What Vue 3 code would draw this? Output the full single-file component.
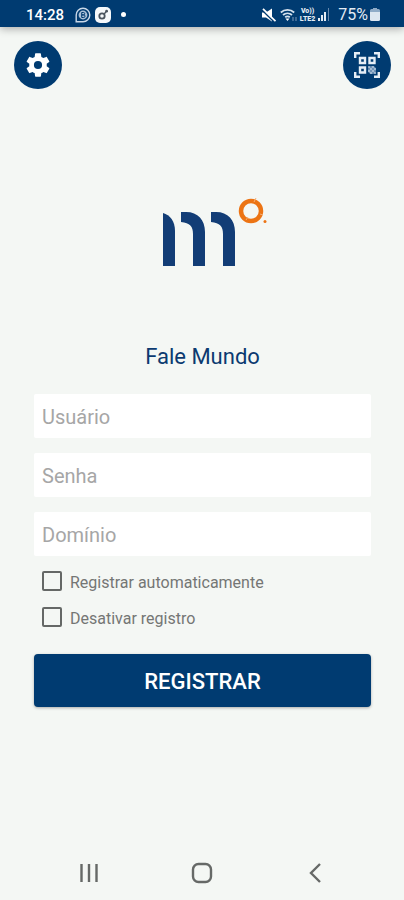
<template>
  <div class="screen">
    <header class="status-bar">
      <div class="status-left">
        <span class="clock">14:28</span>
        <svg class="chat-icon" width="16" height="16" viewBox="0 0 16 16" fill="none">
          <path d="M1.2 14.8V8A6.8 6.8 0 1 1 8 14.8z" stroke="#c9d8e8" stroke-width="1.4" />
          <circle cx="8" cy="8" r="4.4" fill="#a9bfd6" />
          <path d="M6.7 5.5h1.8a1.2 1.2 0 0 1 0 2.4H6.7zM6.7 7.9h2a1.3 1.3 0 0 1 0 2.6h-2z" stroke="#003b71" stroke-width="1" />
        </svg>
        <svg width="16" height="16" viewBox="0 0 16 16">
          <rect width="16" height="16" rx="5" fill="#f5f8fb" />
          <circle cx="7" cy="9" r="2.7" fill="none" stroke="#4a545f" stroke-width="1.8" />
          <path d="M9 7l2-2" stroke="#4a545f" stroke-width="1.5" />
          <circle cx="11.6" cy="4.2" r="1.4" fill="#4a545f" />
        </svg>
        <span class="more-dot"></span>
      </div>
      <div class="status-right">
        <svg width="14" height="14" viewBox="0 0 14 14">
          <path d="M0 4.5h4L10 .5v13L4 9.500H0z" fill="#fff" />
          <path d="M0 1.800l12 12" stroke="#003b71" stroke-width="1.600" />
          <path d="M1 .8L13.500 13.200" stroke="#fff" stroke-width="1.800" />
        </svg>
        <svg class="wifi-icon" width="18" height="14" viewBox="0 0 18 14" fill="none" stroke="#d5e1ed" stroke-width="1.8">
          <path d="M.8 4.500a10 10 0 0 1 13.400 0M3 7a6.800 6.800 0 0 1 9 0M5.200 9.300a3.600 3.600 0 0 1 4.600 0" />
          <path d="M7.500 13L5.500 10.500h4z" fill="#fff" stroke="none" />
          <path d="M13 9v4M16 9v4" stroke="#6688ad" stroke-width="1.2" />
        </svg>
        <span class="volte"><span>Vo))</span><span>LTE2</span></span>
        <svg class="signal-icon" width="12" height="13" viewBox="0 0 12 13">
          <path d="M0 10h2v3H0zM3 7h2v6H3zM6 4h2v9H6z" fill="#e4ecf4" />
          <path d="M10 0h1v13h-1z" fill="#6688ad" />
        </svg>
        <span class="battery-text">75%</span>
        <svg width="10" height="13" viewBox="0 0 10 13">
          <path d="M3 0h4v1h1.500A1.500 1.500 0 0 1 10 2.500V4H0V2.500A1.500 1.500 0 0 1 1.500 1H3z" fill="#8fabc7" />
          <path d="M0 4h10v7.500a1.500 1.500 0 0 1-1.500 1.500h-7A1.500 1.500 0 0 1 0 11.500z" fill="#dce6f0" />
        </svg>
      </div>
    </header>

    <div class="toolbar">
      <button class="round-btn" type="button" aria-label="Configurações">
        <svg width="28" height="28" viewBox="0 0 24 24" fill="#fff">
          <path d="M19.430 12.980c.040-.320.070-.640.070-.980s-.030-.660-.070-.980l2.110-1.650c.190-.150.240-.420.120-.640l-2-3.460c-.120-.220-.390-.300-.610-.220l-2.490 1c-.520-.400-1.080-.730-1.690-.980l-.380-2.650C14.460 2.180 14.250 2 14 2h-4c-.250 0-.460.180-.490.420l-.380 2.650c-.610.250-1.170.590-1.690.980l-2.490-1c-.230-.090-.490 0-.610.220l-2 3.460c-.130.220-.070.490.120.640l2.110 1.650c-.040.320-.070.650-.070.980s.030.660.070.980l-2.110 1.650c-.190.150-.240.420-.120.640l2 3.460c.120.220.390.300.610.220l2.490-1c.520.400 1.080.730 1.690.980l.380 2.650c.030.240.240.420.490.420h4c.250 0 .460-.180.490-.420l.380-2.650c.610-.250 1.170-.590 1.690-.980l2.490 1c.230.090.490 0 .610-.220l2-3.460c.120-.220.070-.490-.120-.640zM12 15.500A3.500 3.500 0 1 1 12 8.500a3.500 3.500 0 0 1 0 7z" />
        </svg>
      </button>
      <button class="round-btn" type="button" aria-label="Ler código QR">
        <svg width="26" height="26" viewBox="0 0 26 26" fill="none" stroke="#e6eef6" stroke-width="2.400">
          <path d="M1.200 6V1.200H6M20 1.200h4.800V6M1.200 20v4.800H6M20 24.800h4.800V20" />
          <path d="M6 6h5v5H6zM15.500 6h5v5h-5zM6 15.500h5v5H6z" />
          <circle cx="18" cy="18" r="4" fill="#6f92b6" stroke="none" />
          <path d="M14 15h2M18 15h2M16 17h2M20 17h2M14 19h2M18 19h2M16 21h2M20 21h2" stroke="#b4c8dc" stroke-width="1.600" />
        </svg>
      </button>
    </div>

    <main class="login">
      <svg class="logo" width="106" height="72" viewBox="0 0 106 72" role="img" aria-label="Mundo">
        <g fill="#123d76">
          <path d="M1 16C8 18 13 24 13 34V69H1z" />
          <path d="M19 15h5C36 15 43 23 43 35V69H31V37C31 29 28 26 19 25z" />
          <path d="M49 15h5C66 15 73 23 73 35V69H61V37C61 29 58 26 49 25z" />
        </g>
        <circle cx="89" cy="14" r="10" fill="none" stroke="#ec7414" stroke-width="4.500" />
        <path d="M92 5l2-4M84 23l2-3M98 17l3 1" stroke="#f5ae76" stroke-width="1" />
        <circle cx="103" cy="24.500" r="1.500" fill="#ec7414" />
      </svg>
      <h1>Fale Mundo</h1>

      <form @submit.prevent>
        <input v-model="usuario" class="field" type="text" placeholder="Usuário" aria-label="Usuário" />
        <input v-model="senha" class="field" type="password" placeholder="Senha" aria-label="Senha" />
        <input v-model="dominio" class="field" type="text" placeholder="Domínio" aria-label="Domínio" />
        <div class="options">
          <label class="option">
            <input v-model="autoRegistro" type="checkbox" />
            <span>Registrar automaticamente</span>
          </label>
          <label class="option">
            <input v-model="desativar" type="checkbox" />
            <span>Desativar registro</span>
          </label>
        </div>
        <button class="submit" type="submit">REGISTRAR</button>
      </form>
    </main>

    <nav class="nav-bar">
      <button type="button" aria-label="Recentes">
        <svg width="22" height="22" viewBox="0 0 22 22" stroke="#666967" stroke-width="2.400">
          <path d="M3.500 2v18M11 2v18M18.500 2v18" />
        </svg>
      </button>
      <button type="button" aria-label="Início">
        <svg width="22" height="22" viewBox="0 0 22 22" fill="none" stroke="#666967" stroke-width="2.400">
          <rect x="2" y="2" width="18" height="18" rx="5.500" />
        </svg>
      </button>
      <button type="button" aria-label="Voltar">
        <svg width="22" height="22" viewBox="0 0 22 22" fill="none" stroke="#666967" stroke-width="2.400">
          <path d="M16 2l-9 9 9 9" />
        </svg>
      </button>
    </nav>
  </div>
</template>

<script setup>
import { ref } from 'vue'

const usuario = ref('')
const senha = ref('')
const dominio = ref('')
const autoRegistro = ref(false)
const desativar = ref(false)
</script>

<style>
body {
  background: #f4f7f4;
}
</style>

<style scoped>
.screen {
  display: flex;
  flex-direction: column;
  min-height: 100vh;
  background: #f4f7f4;
  font-family: Roboto, sans-serif;
}

.screen svg {
  display: block;
  flex-shrink: 0;
}

button {
  padding: 0;
  border: none;
  background: none;
  font-family: inherit;
  cursor: pointer;
}

.status-bar {
  display: flex;
  align-items: center;
  justify-content: space-between;
  height: 27px;
  padding: 2px 24px 0 26px;
  box-sizing: border-box;
  background: #003b71;
  box-shadow: 0 2px 8px rgba(0, 0, 0, 0.3);
  color: #e4ecf4;
}

.status-left,
.status-right {
  display: flex;
  align-items: center;
}

.clock {
  color: #fff;
  font-size: 15px;
  font-weight: 500;
}

.chat-icon {
  margin: 0 4px 0 11px;
}

.more-dot {
  width: 5px;
  height: 5px;
  margin-left: 10px;
  border-radius: 50%;
  background: #fff;
}

.wifi-icon {
  margin: 0 2px 0 4px;
}

.volte {
  display: flex;
  flex-direction: column;
  align-items: center;
  font-size: 7px;
  line-height: 8px;
  font-weight: 900;
}

.signal-icon {
  margin: 0 8px 0 3px;
}

.battery-text {
  margin-right: 2px;
  font-size: 16px;
}

.toolbar {
  display: flex;
  justify-content: space-between;
  padding: 14px 13px 0 14px;
}

.round-btn {
  display: flex;
  align-items: center;
  justify-content: center;
  width: 48px;
  height: 48px;
  border-radius: 50%;
  background: #003b71;
}

.login {
  display: flex;
  flex: 1;
  flex-direction: column;
  padding: 108px 33px 0 34px;
}

.logo {
  align-self: center;
  margin-left: 24px;
}

h1 {
  margin: 74px 0 23px;
  color: #0b3a70;
  font-size: 22px;
  line-height: 28px;
  font-weight: 400;
  text-align: center;
}

form {
  display: flex;
  flex-direction: column;
  gap: 15px;
}

.field {
  width: 100%;
  height: 44px;
  padding: 2px 8px 0;
  box-sizing: border-box;
  border: none;
  border-radius: 2px;
  outline: none;
  background: #fff;
  color: #333;
  font-family: inherit;
  font-size: 20px;
}

.field::placeholder {
  color: #a6a6a6;
  opacity: 1;
}

.options {
  display: flex;
  flex-direction: column;
  gap: 14px;
  padding: 0 8px;
}

.option {
  display: flex;
  align-items: flex-start;
  gap: 8px;
  color: #747674;
  font-size: 16px;
  line-height: 20px;
}

.option span {
  padding-top: 2px;
}

.option input {
  appearance: none;
  width: 20px;
  height: 20px;
  margin: 0;
  border: 2px solid #656866;
  border-radius: 2px;
}

.option input:checked {
  border-color: #003b71;
  background: #003b71;
}

.submit {
  height: 53px;
  margin-top: 10px;
  padding-top: 2px;
  border-radius: 4px;
  background: #003b71;
  box-shadow: 0 1px 3px rgba(0, 0, 0, 0.3);
  color: #fff;
  font-size: 22px;
  font-weight: 500;
}

.nav-bar {
  display: flex;
  padding: 0 32px 16px;
}

.nav-bar button {
  display: flex;
  flex: 1;
  justify-content: center;
}
</style>
